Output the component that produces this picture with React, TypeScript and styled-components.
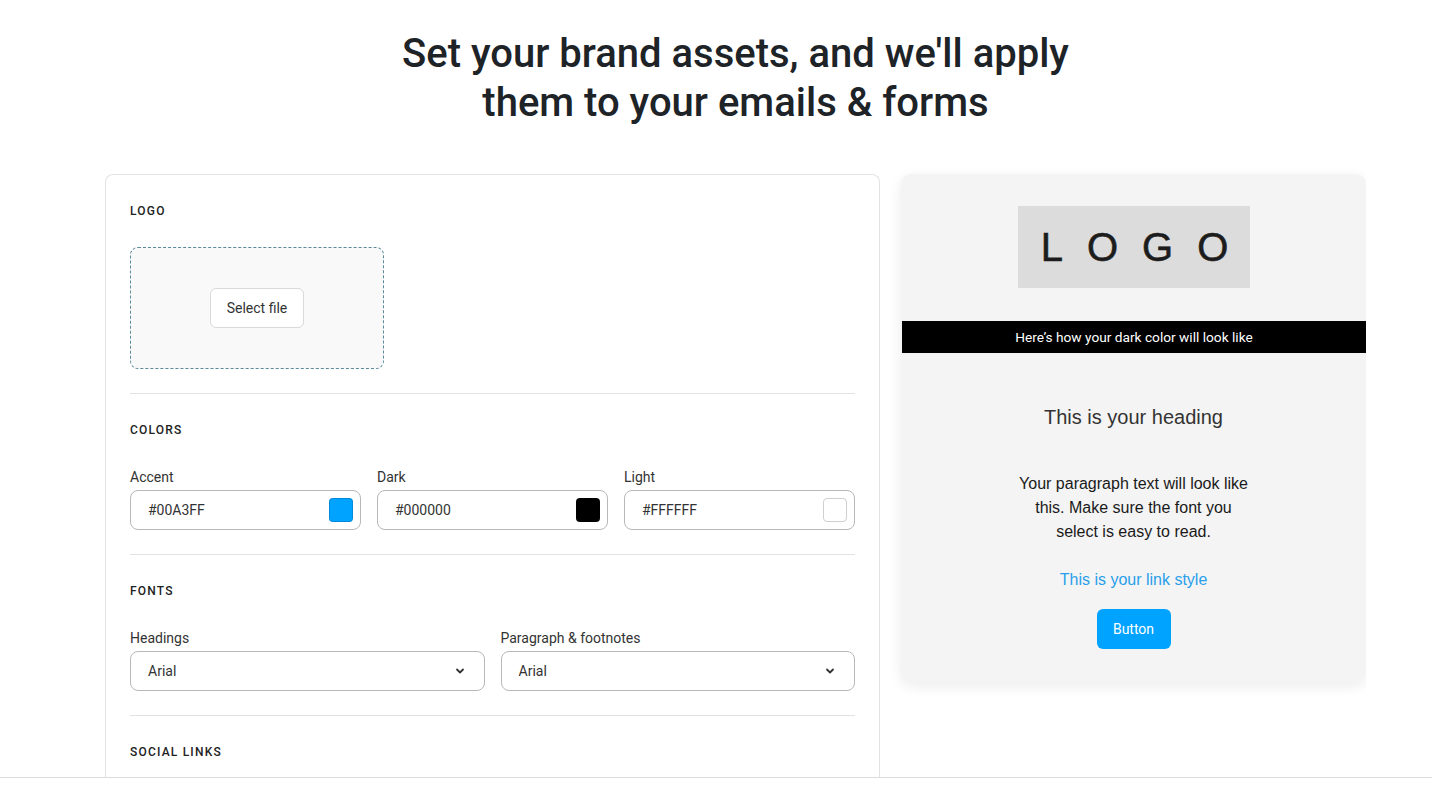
import React from "react";
import styled, { createGlobalStyle } from "styled-components";

const Global = createGlobalStyle`
  html, body { margin: 0; padding: 0; background: #ffffff; }
  body { font-family: Roboto, "Liberation Sans", Arial, sans-serif; color: #222; }
  * { box-sizing: border-box; }
`;

const Page = styled.div`
  height: 789px;
  display: flex;
  flex-direction: column;
  overflow: hidden;
`;

const Main = styled.main`
  flex: 1;
  min-height: 0;
  overflow: hidden;
  display: flex;
  flex-direction: column;
  width: 1261px;
  margin-left: 105px;
`;

const Title = styled.h1`
  margin: 0;
  padding-top: 29px;
  text-align: center;
  font-family: Roboto, sans-serif;
  font-weight: 500;
  font-size: 40px;
  line-height: 49px;
  color: #1d2327;
`;

const Columns = styled.div`
  display: grid;
  grid-template-columns: 775px 465px;
  column-gap: 21px;
  margin-top: 47px;
  align-items: start;
  flex: 1;
  min-height: 0;
`;

const EditorCard = styled.section`
  border: 1px solid #e3e3e3;
  border-bottom: none;
  border-radius: 8px 8px 0 0;
  padding: 0 24px;
  height: 100%;
  background: #fff;
`;

const Section = styled.div<{ $last?: boolean }>`
  padding: 28px 0 24px;
  border-bottom: ${(p) => (p.$last ? "none" : "1px solid #e2e2e2")};
`;

const SectionTitle = styled.div`
  font-family: Roboto, sans-serif;
  font-size: 12px;
  line-height: 16px;
  font-weight: 500;
  letter-spacing: 1.2px;
  color: #222;
  text-transform: uppercase;
`;

const DropZone = styled.div`
  margin-top: 28px;
  width: 254px;
  height: 122px;
  border: 1px dashed #5b8a99;
  border-radius: 8px;
  background: #f9f9fa;
  display: flex;
  align-items: center;
  justify-content: center;
`;

const GhostButton = styled.button`
  height: 40px;
  padding: 0 16px;
  background: #fff;
  border: 1px solid #d9d9d9;
  border-radius: 6px;
  font-family: Roboto, sans-serif;
  font-size: 14px;
  color: #333;
  cursor: pointer;
`;

const FieldRow = styled.div<{ $cols: number }>`
  margin-top: 29px;
  display: grid;
  grid-template-columns: repeat(${(p) => p.$cols}, 1fr);
  column-gap: 16px;
`;

const Field = styled.label`
  display: flex;
  flex-direction: column;
  gap: 3px;
`;

const FieldLabel = styled.span`
  font-family: Roboto, sans-serif;
  font-size: 14px;
  line-height: 20px;
  color: #333;
`;

const InputBox = styled.div`
  height: 40px;
  border: 1px solid #b8b8b8;
  border-radius: 8px;
  display: flex;
  align-items: center;
  justify-content: space-between;
  padding: 0 7px 0 17px;
  background: #fff;
  font-family: Roboto, sans-serif;
  font-size: 14px;
  color: #333;
`;

const SelectBox = styled(InputBox)`
  padding: 0 19px 0 17px;
`;

const Swatch = styled.span<{ $color: string }>`
  width: 24px;
  height: 24px;
  border-radius: 4px;
  background: ${(p) => p.$color};
  border: 1px solid ${(p) => (p.$color === "#FFFFFF" ? "#cfcfcf" : "rgba(0,0,0,0.15)")};
`;

const Preview = styled.aside`
  background: #f4f4f4;
  border-radius: 10px;
  box-shadow: 0 4px 14px rgba(0, 0, 0, 0.08);
  padding: 32px 0 33px;
  display: flex;
  flex-direction: column;
  align-items: center;
`;

const LogoBox = styled.div`
  width: 232px;
  height: 82px;
  background: #dcdcdc;
  display: flex;
  align-items: center;
  justify-content: center;
  font-family: "Liberation Sans", Arial, sans-serif;
  font-size: 40px;
  letter-spacing: 24px;
  padding-left: 26px;
  color: #1c1c1c;
  -webkit-text-stroke: 0.6px #1c1c1c;
`;

const DarkBar = styled.div`
  margin-top: 33px;
  align-self: stretch;
  margin-left: 1px;
  height: 32px;
  background: #000;
  color: #fff;
  display: flex;
  align-items: center;
  justify-content: center;
  font-family: Roboto, sans-serif;
  font-size: 13.7px;
`;

const PreviewHeading = styled.h2`
  margin: 52px 0 0;
  font-family: "Liberation Sans", Arial, sans-serif;
  font-weight: 400;
  font-size: 20px;
  line-height: 24px;
  color: #333;
`;

const PreviewParagraph = styled.p`
  margin: 43px 0 0;
  max-width: 240px;
  text-align: center;
  font-family: "Liberation Sans", Arial, sans-serif;
  font-size: 16px;
  line-height: 24px;
  color: #1a1a1a;
`;

const PreviewLink = styled.a`
  margin-top: 24px;
  font-family: "Liberation Sans", Arial, sans-serif;
  font-size: 16px;
  line-height: 24px;
  color: #2a9fea;
  text-decoration: none;
`;

const AccentButton = styled.button`
  margin-top: 17px;
  height: 40px;
  width: 74px;
  border: none;
  border-radius: 6px;
  background: #00a3ff;
  color: #fff;
  font-family: Roboto, sans-serif;
  font-size: 14px;
`;

const Footer = styled.footer`
  height: 12px;
  border-top: 1px solid #dcdcdc;
  background: #fff;
`;

const Chevron = () => (
  <svg width="10" height="10" viewBox="0 0 10 10" fill="none">
    <path d="M2 3.5 L5 6.5 L8 3.5" stroke="#333" strokeWidth="1.8" strokeLinecap="round" strokeLinejoin="round" />
  </svg>
);

const colors = [
  { label: "Accent", value: "#00A3FF" },
  { label: "Dark", value: "#000000" },
  { label: "Light", value: "#FFFFFF" },
];

const fonts = [
  { label: "Headings", value: "Arial" },
  { label: "Paragraph & footnotes", value: "Arial" },
];

export default function App() {
  return (
    <>
      <Global />
      <Page>
        <Main>
          <Title>
            Set your brand assets, and we'll apply
            <br />
            them to your emails &amp; forms
          </Title>
          <Columns>
            <EditorCard>
              <Section>
                <SectionTitle>Logo</SectionTitle>
                <DropZone>
                  <GhostButton>Select file</GhostButton>
                </DropZone>
              </Section>
              <Section>
                <SectionTitle>Colors</SectionTitle>
                <FieldRow $cols={3}>
                  {colors.map((c) => (
                    <Field key={c.label}>
                      <FieldLabel>{c.label}</FieldLabel>
                      <InputBox>
                        <span>{c.value}</span>
                        <Swatch $color={c.value} />
                      </InputBox>
                    </Field>
                  ))}
                </FieldRow>
              </Section>
              <Section>
                <SectionTitle>Fonts</SectionTitle>
                <FieldRow $cols={2}>
                  {fonts.map((f) => (
                    <Field key={f.label}>
                      <FieldLabel>{f.label}</FieldLabel>
                      <SelectBox>
                        <span>{f.value}</span>
                        <Chevron />
                      </SelectBox>
                    </Field>
                  ))}
                </FieldRow>
              </Section>
              <Section $last>
                <SectionTitle>Social links</SectionTitle>
              </Section>
            </EditorCard>
            <Preview>
              <LogoBox>LOGO</LogoBox>
              <DarkBar>Here’s how your dark color will look like</DarkBar>
              <PreviewHeading>This is your heading</PreviewHeading>
              <PreviewParagraph>
                Your paragraph text will look like this. Make sure the font you select is easy to read.
              </PreviewParagraph>
              <PreviewLink href="#">This is your link style</PreviewLink>
              <AccentButton>Button</AccentButton>
            </Preview>
          </Columns>
        </Main>
        <Footer />
      </Page>
    </>
  );
}
